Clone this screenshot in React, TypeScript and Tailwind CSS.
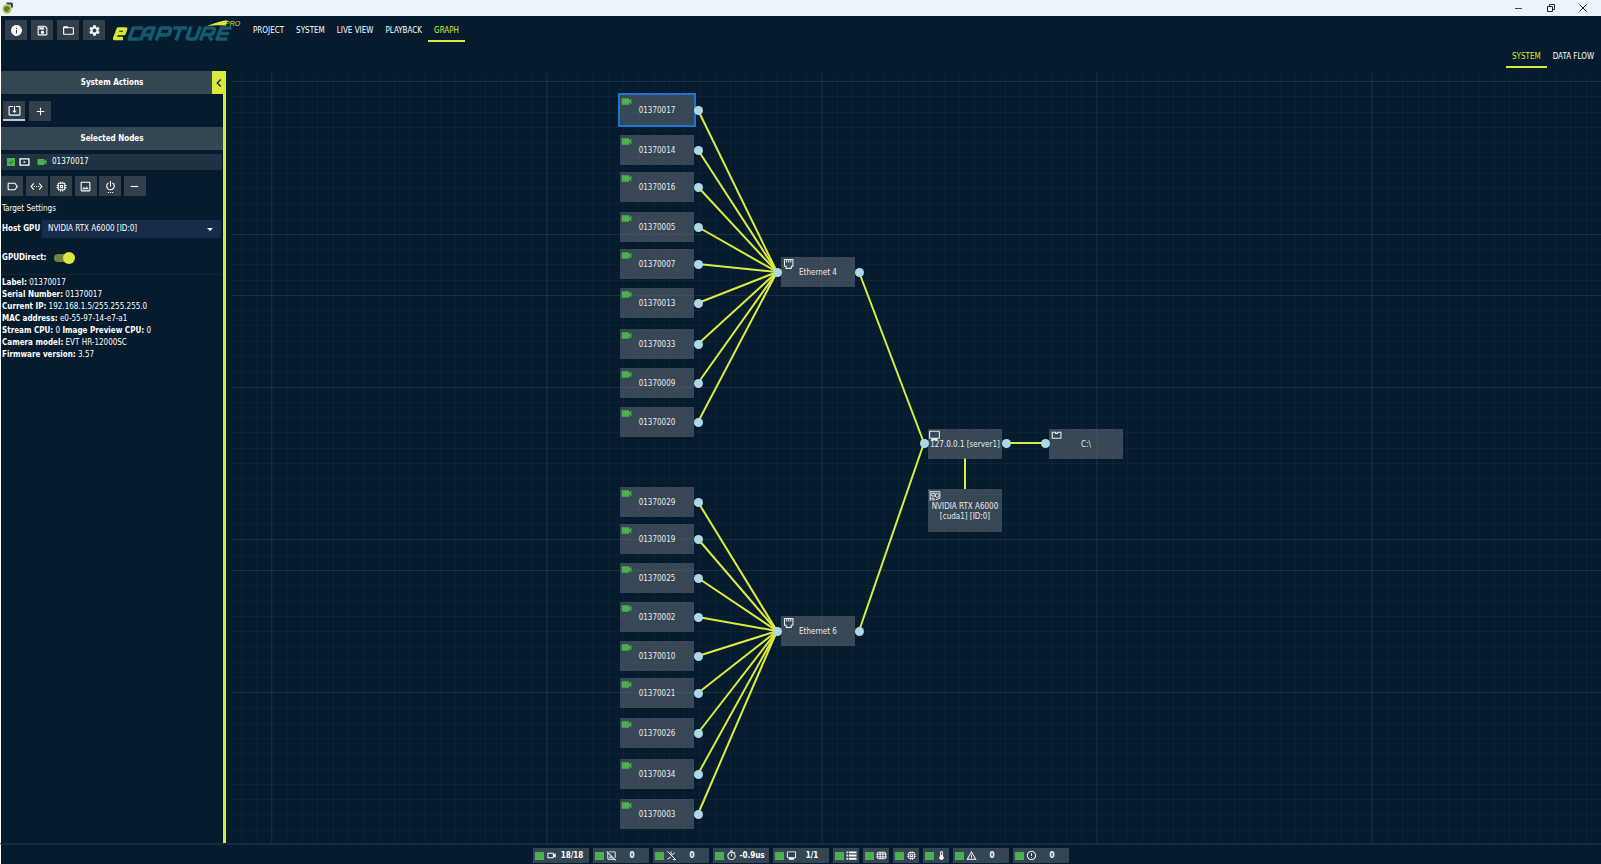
import type { ReactNode } from "react";
import {
    MdAdd,
    MdChevronLeft,
    MdErrorOutline,
    MdFolderOpen,
    MdInfo,
    MdLabelOutline,
    MdMemory,
    MdOutlineImage,
    MdOutlineImageNotSupported,
    MdOutlineMonitor,
    MdOutlineSave,
    MdOutlineTimer,
    MdOutlineVideocam,
    MdRemove,
    MdSettings,
    MdSettingsEthernet,
    MdSettingsPower,
    MdSystemUpdateAlt,
    MdThermostat,
    MdVideocam,
    MdWarningAmber,
} from "react-icons/md";

const cameras = [
    { id: "01370017", y: 39, to: 0 },
    { id: "01370014", y: 79, to: 0 },
    { id: "01370016", y: 116, to: 0 },
    { id: "01370005", y: 156, to: 0 },
    { id: "01370007", y: 193, to: 0 },
    { id: "01370013", y: 232, to: 0 },
    { id: "01370033", y: 273, to: 0 },
    { id: "01370009", y: 312, to: 0 },
    { id: "01370020", y: 351, to: 0 },
    { id: "01370029", y: 431, to: 1 },
    { id: "01370019", y: 468, to: 1 },
    { id: "01370025", y: 507, to: 1 },
    { id: "01370002", y: 546, to: 1 },
    { id: "01370010", y: 585, to: 1 },
    { id: "01370021", y: 622, to: 1 },
    { id: "01370026", y: 662, to: 1 },
    { id: "01370034", y: 703, to: 1 },
    { id: "01370003", y: 743, to: 1 },
];

const switches = [
    { label: "Ethernet 4", y: 201 },
    { label: "Ethernet 6", y: 560 },
];

const server = { x: 702, y: 372 };

const EthernetIcon = () => (
    <svg viewBox="0 0 24 24" className="size-[13px]" fill="none" stroke="currentColor" strokeWidth="2">
        <path d="M6.500 4.500H22V17h-3v4h-9.500v-4h-3z" />
        <path d="M10.500 5v5M14.300 5v5M18 5v5" />
    </svg>
);

const GpuIcon = () => (
    <svg viewBox="0 0 24 24" className="size-[13px]" fill="none" stroke="currentColor" strokeWidth="1.800">
        <path d="M2 3l2 2v17M4 5h18v12M4 17h8M7 20h6M7 8h6v5H7z" />
        <circle cx="17" cy="12" r="3.500" />
        <path d="M14 20l8-3" />
    </svg>
);

const FolderIcon = () => (
    <svg viewBox="0 0 24 24" className="size-[13px]" fill="none" stroke="currentColor" strokeWidth="2">
        <path d="M6 17V6h6v2h4V6h6v11z" />
    </svg>
);

const MutedIcon = () => (
    <svg viewBox="0 0 24 24" className="size-[11px]" fill="none" stroke="currentColor" strokeWidth="2">
        <path d="M3 3l18 18M11 3v8M19 6l-6 5M3 20l8-5M15 21h6" />
    </svg>
);

const ListIcon = () => (
    <svg viewBox="0 0 24 24" className="size-[11px]" fill="none" stroke="currentColor" strokeWidth="4">
        <path d="M1 5h3M6 5h17M1 12h3M6 12h17M1 19h3M6 19h17" />
    </svg>
);

const GridIcon = () => (
    <svg viewBox="0 0 24 24" className="size-[11px]" fill="none" stroke="currentColor" strokeWidth="2">
        <rect x="3" y="5" width="18" height="14" rx="2" />
        <path d="M1 9h22M1 15h22M9 5v14M15 5v14" />
    </svg>
);

const Logo = () => (
    <svg viewBox="0 0 128 24" className="ml-2 h-6 w-32 shrink-0" role="img" aria-label="eCapture Pro">
        <g fill="none" strokeWidth="3.500" strokeLinejoin="round" transform="translate(-2 1) scale(1.040 1)">
            <path stroke="#d9e534" d="M4 14.500h8.500l1.500-4.500H7L3.500 19.500h8" />
            <g stroke="#14596c">
                <path d="M31 9H21.500l-4 11h9.500" />
                <path d="M28.500 21.500l3-8.500q1.500-4 5-4h5l-4.500 12.500M31 16h8" />
                <path d="M43.500 21.500L48 9h8q2 0 1 3l-.8 2q-.5 2-3 2h-6" />
                <path d="M60 9h13M67 9l-4.500 12.500" />
                <path d="M77 7.500L73.500 18q-.5 2 1.500 2h4.500q2 0 2.800-2L86 7.500" />
                <path d="M86 21.500L90.500 9H98q2 0 1 3l-.5 1q-.8 2.500-3 2.500H89M94 16l3 5.500" />
                <path d="M116 9h-10l-4 11h10M103.500 14.500h10" />
            </g>
        </g>
        <path fill="#d9e534" d="M94 8q11-4.500 18-5.500l3 0-3 5q-9-.8-18 .5z" />
        <text x="112" y="8" fontSize="7" fontStyle="italic" fill="#d9e534" fontFamily="Liberation Sans, sans-serif">PRO</text>
    </svg>
);

const IconButton = ({ label, active, children }: { label: string; active?: boolean; children: ReactNode }) => (
    <button
        aria-label={label}
        className={`flex h-5 w-[22px] shrink-0 items-center justify-center bg-[#323f4b] text-[13px] text-white ${active ? "border-b-2 border-[#c3c9ce]" : ""}`}
    >
        {children}
    </button>
);

const Tab = ({ active, children }: { active?: boolean; children: ReactNode }) => (
    <a
        href="#"
        className={`flex h-6 items-center border-b-2 px-1.5 pt-1 ${active ? "border-[#dbe83c] text-[#dbe83c]" : "border-transparent text-white"}`}
    >
        {children}
    </a>
);

const PanelTitle = ({ children }: { children: ReactNode }) => (
    <h2 className="flex h-[23px] items-center justify-center bg-[#364754] text-center font-bold">{children}</h2>
);

const Info = ({ name, value }: { name: string; value: string }) => (
    <>
        <b>{name}:</b> {value}{" "}
    </>
);

const Status = ({ icon, value }: { icon: ReactNode; value?: string }) => (
    <div className={`flex h-[15px] items-center gap-0.5 bg-[#344654] pl-0.5 ${value ? "w-14 pr-1" : "w-[26px]"}`}>
        <span className="h-2 w-[9px] shrink-0 bg-[#4caf50]" />
        <span className="shrink-0 text-[11px]">{icon}</span>
        {value && <span className="flex-1 text-center font-bold whitespace-nowrap">{value}</span>}
    </div>
);

const Node = ({ x, y, label, icon, selected, tall }: { x: number; y: number; label: string; icon: ReactNode; selected?: boolean; tall?: boolean }) => (
    <div
        className={`absolute flex w-[74px] items-center justify-center bg-[#5a6671]/60 pt-0.5 text-center leading-[10px] text-[#e8ecef] ${tall ? "h-[43px]" : "h-[30px]"} ${selected ? "outline-2 outline-[#1976d2]" : ""}`}
        style={{ left: x, top: y }}
    >
        <span className="absolute top-0 left-0 text-[13px]">{icon}</span>
        {label}
    </div>
);

const Port = ({ x, y }: { x: number; y: number }) => (
    <span className="absolute size-[9px] rounded-full bg-[#add8e6]" style={{ left: x - 4, top: y - 4 }} />
);

const lines = (first: number, step: number, count: number) => Array.from({ length: count }, (_, i) => Math.round(first + i * step) + 0.5);

const Links = () => (
    <svg className="absolute inset-0 h-full w-full">
        <g stroke="#8fb3c4" strokeOpacity="0.05">
            {lines(15, 15.28, 90).map((x) => <line key={x} x1={x} x2={x} y1="2" y2="100%" />)}
            {lines(10, 15.28, 50).map((y) => <line key={y} x1="6" x2="100%" y1={y} y2={y} />)}
        </g>
        <g stroke="#8fb3c4" strokeOpacity="0.1">
            {lines(45, 275, 5).map((x) => <line key={x} x1={x} x2={x} y1="2" y2="100%" />)}
            {lines(10, 152.8, 5).map((y) => <line key={y} x1="6" x2="100%" y1={y} y2={y} />)}
            {lines(224, 275, 2).map((y) => <line key={y} x1="6" x2="100%" y1={y} y2={y} />)}
        </g>
        <g stroke="#dcec3f" strokeWidth="2">
            {cameras.map((c) => <line key={c.id} x1="472" y1={c.y} x2="551" y2={switches[c.to].y} />)}
            {switches.map((s) => <line key={s.label} x1="633" y1={s.y} x2="698" y2={server.y} />)}
            <line x1="780" y1="372" x2="819" y2="372" />
            <line x1="739" y1="387" x2="739" y2="418" />
        </g>
    </svg>
);

const Graph = () => (
    <main className="relative min-w-0 flex-1 overflow-hidden">
        <Links />
        {cameras.map((c, i) => (
            <div key={c.id}>
                <Node x={394} y={c.y - 15} label={c.id} selected={i === 0} icon={<MdVideocam className="text-[#4caf50]" />} />
                <Port x={472} y={c.y} />
            </div>
        ))}
        {switches.map((s) => (
            <div key={s.label}>
                <Node x={555} y={s.y - 15} label={s.label} icon={<EthernetIcon />} />
                <Port x={551} y={s.y} />
                <Port x={633} y={s.y} />
            </div>
        ))}
        <Node x={server.x} y={358} label="127.0.0.1 [server1]" icon={<MdOutlineMonitor />} />
        <Port x={698} y={server.y} />
        <Port x={780} y={server.y} />
        <Node x={823} y={358} label="C:\" icon={<FolderIcon />} />
        <Port x={819} y={server.y} />
        <Node x={server.x} y={418} tall label="NVIDIA RTX A6000 [cuda1] [ID:0]" icon={<GpuIcon />} />
    </main>
);

const Sidebar = () => (
    <aside className="relative w-[225px] shrink-0 border-r-[3px] border-[#dbe83c]">
        <PanelTitle>System Actions</PanelTitle>
        <button aria-label="Collapse panel" className="absolute top-0 -right-[3px] flex h-[23px] w-3.5 items-center justify-center bg-[#dbe83c] text-[#10283a]">
            <MdChevronLeft className="size-4 shrink-0" />
        </button>
        <div className="flex gap-1 px-0.5 pt-[7px] pb-1.5">
            <IconButton label="Import" active><MdSystemUpdateAlt /></IconButton>
            <IconButton label="Add"><MdAdd /></IconButton>
        </div>
        <PanelTitle>Selected Nodes</PanelTitle>
        <div className="mt-1 mr-px flex h-4 items-center bg-[#1f3343] pl-1.5">
            <label className="flex items-center gap-1">
                <span className="relative flex size-2">
                    <input type="checkbox" defaultChecked aria-label="Select node 01370017" className="size-2 appearance-none bg-[#4caf50]" />
                    <svg viewBox="0 0 8 8" className="pointer-events-none absolute inset-0 size-2" fill="none" stroke="#1f5c30">
                        <path d="M2 4l1.500 1.500L6 2.500" />
                    </svg>
                </span>
                <svg viewBox="0 0 24 18" className="h-2 w-[11px]" fill="none" stroke="currentColor" strokeWidth="3">
                    <path d="M2 2h20v14H2z" />
                    <path d="M10 6l5 3-5 3z" fill="currentColor" stroke="none" />
                </svg>
                <MdVideocam className="ml-0.5 size-3 text-[#4caf50]" />
                <span>01370017</span>
            </label>
        </div>
        <div className="flex w-[145px] justify-between pt-1.5">
            <IconButton label="Label"><MdLabelOutline /></IconButton>
            <IconButton label="Network"><MdSettingsEthernet /></IconButton>
            <IconButton label="Processor"><MdMemory /></IconButton>
            <IconButton label="Image"><MdOutlineImage /></IconButton>
            <IconButton label="Power"><MdSettingsPower /></IconButton>
            <IconButton label="Remove"><MdRemove /></IconButton>
        </div>
        <p className="mt-[7px] px-px">Target Settings</p>
        <div className="mt-[5px] flex items-center pr-0.5 pl-px">
            <label htmlFor="gpu" className="w-10 font-bold whitespace-nowrap">Host GPU</label>
            <div className="relative flex-1">
                <select id="gpu" className="block h-[18px] w-full appearance-none bg-[#152d48] pl-1.5">
                    <option>NVIDIA RTX A6000 [ID:0]</option>
                </select>
                <span className="pointer-events-none absolute top-2 right-2 border-x-[3px] border-t-[3px] border-x-transparent border-t-white" />
            </div>
        </div>
        <label className="mt-3 flex h-4 items-center gap-2 px-px font-bold">
            GPUDirect:
            <span className="relative flex h-3 w-[21px] items-center">
                <input type="checkbox" role="switch" defaultChecked className="h-2 w-5 appearance-none rounded-full bg-[#73843a]" />
                <span className="pointer-events-none absolute right-0 size-3 rounded-full bg-[#dbe83c]" />
            </span>
        </label>
        <div className="mt-2 border-t border-[#0f2637] px-px pt-0.5">
            <p><Info name="Label" value="01370017" /></p>
            <p><Info name="Serial Number" value="01370017" /></p>
            <p><Info name="Current IP" value="192.168.1.5/255.255.255.0" /></p>
            <p><Info name="MAC address" value="e0-55-97-14-e7-a1" /></p>
            <p><Info name="Stream CPU" value="0" /><Info name="Image Preview CPU" value="0" /></p>
            <p><Info name="Camera model" value="EVT HR-12000SC" /></p>
            <p><Info name="Firmware version" value="3.57" /></p>
        </div>
    </aside>
);

const TitleBar = () => (
    <div className="flex h-4 shrink-0 items-center justify-between bg-[#ebf4fb] pr-3.5 pl-0.5 text-[#222]">
        <svg viewBox="0 0 24 24" className="size-3">
            <path fill="#23456b" d="M9 1h10q3 0 3 4v6h-4V6L9 4z" />
            <circle cx="10" cy="14" r="9" fill="#a9bf2b" />
            <path fill="none" stroke="#23456b" strokeWidth="2" d="M6 14h8q0-4-4-4t-4 4 4 4h3" />
        </svg>
        <div className="flex gap-6">
            <button aria-label="Minimize" className="w-2"><span className="block h-px w-[7px] bg-[#444]" /></button>
            <button aria-label="Restore">
                <svg viewBox="0 0 8 8" className="size-2" fill="none" stroke="currentColor">
                    <path d="M.5 2.500h5v5h-5zM2.500 2V.5h5v5H6" />
                </svg>
            </button>
            <button aria-label="Close">
                <svg viewBox="0 0 8 8" className="size-2" fill="none" stroke="currentColor">
                    <path d="M.5.5l7 7M7.500.5l-7 7" />
                </svg>
            </button>
        </div>
    </div>
);

const App = () => {
    return <div className="flex h-screen flex-col overflow-hidden bg-[#061b2d] font-['DejaVu_Sans_Condensed','Noto_Sans',sans-serif] text-[8px] leading-3 text-white">
        <TitleBar />
        <header className="flex h-[55px] shrink-0 flex-col border-l border-white">
            <div className="flex items-center pt-0.5 pl-1">
                <div className="flex gap-1">
                    <IconButton label="About"><MdInfo /></IconButton>
                    <IconButton label="Save"><MdOutlineSave /></IconButton>
                    <IconButton label="Open"><MdFolderOpen /></IconButton>
                    <IconButton label="Settings"><MdSettings /></IconButton>
                </div>
                <Logo />
                <nav className="ml-1.5 flex">
                    <Tab>PROJECT</Tab>
                    <Tab>SYSTEM</Tab>
                    <Tab>LIVE VIEW</Tab>
                    <Tab>PLAYBACK</Tab>
                    <Tab active>GRAPH</Tab>
                </nav>
            </div>
            <nav className="mt-0.5 flex justify-end pr-px">
                <Tab active>SYSTEM</Tab>
                <Tab>DATA FLOW</Tab>
            </nav>
        </header>
        <div className="flex min-h-0 flex-1 border-l border-white">
            <Sidebar />
            <Graph />
        </div>
        <footer className="flex h-[21px] shrink-0 items-start justify-center gap-1 border-t-2 border-l border-t-[#152b3c] border-l-white pt-[3px]">
            <Status icon={<MdOutlineVideocam />} value="18/18" />
            <Status icon={<MdOutlineImageNotSupported />} value="0" />
            <Status icon={<MutedIcon />} value="0" />
            <Status icon={<MdOutlineTimer />} value="-0.9us" />
            <Status icon={<MdOutlineMonitor />} value="1/1" />
            <Status icon={<ListIcon />} />
            <Status icon={<GridIcon />} />
            <Status icon={<MdMemory />} />
            <Status icon={<MdThermostat />} />
            <Status icon={<MdWarningAmber />} value="0" />
            <Status icon={<MdErrorOutline />} value="0" />
        </footer>
    </div>
}

export default App
